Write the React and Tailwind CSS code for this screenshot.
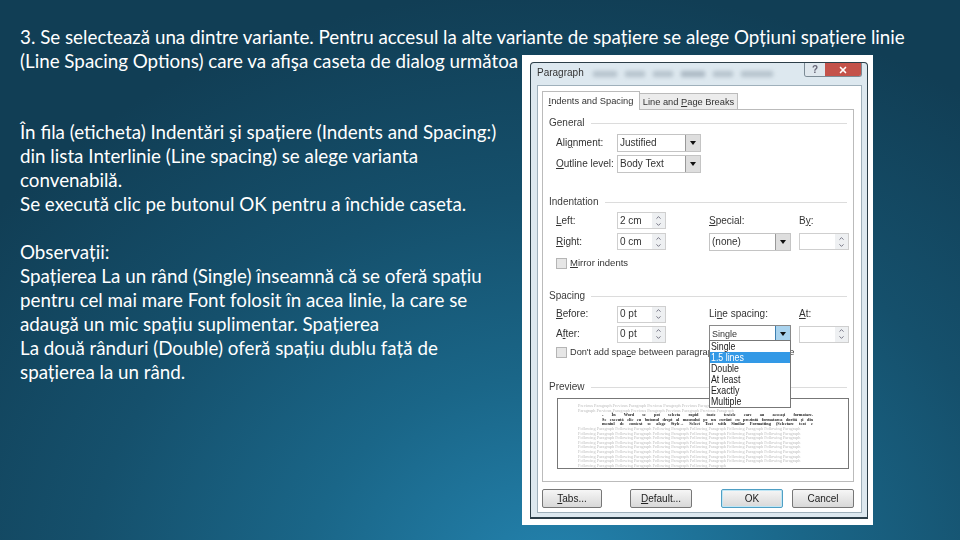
import { ChevronDown, ChevronUp, X } from 'lucide-react'

const textFont = "font-['Lato','Open_Sans',sans-serif]"
const dialogFont = "font-['Liberation_Sans','Arial',sans-serif]"

const introLines = [
  '3. Se selectează una dintre variante. Pentru accesul la alte variante de spațiere se alege Opțiuni spațiere linie',
  '(Line Spacing Options) care va afişa caseta de dialog următoa',
]

const bodyLines = [
  'În fila (eticheta) Indentări şi spațiere (Indents and Spacing:)',
  'din lista Interlinie (Line spacing) se alege varianta',
  'convenabilă.',
  'Se execută clic pe butonul OK pentru a închide caseta.',
]

const noteLines = [
  'Observații:',
  'Spațierea La un rând (Single) înseamnă că se oferă spațiu',
  'pentru cel mai mare Font folosit în acea linie, la care se',
  'adaugă un mic spațiu suplimentar. Spațierea',
  'La două rânduri (Double) oferă spațiu dublu față de',
  'spațierea la un rând.',
]

const dropdownItems = ['Single', '1.5 lines', 'Double', 'At least', 'Exactly', 'Multiple']

const followingLine =
  'Following Paragraph Following Paragraph Following Paragraph Following Paragraph Following Paragraph Following Paragraph'

function Lines({ items }) {
  return (
    <div>
      {items.map((line) => (
        <p key={line} className="h-6 whitespace-nowrap">
          {line}
        </p>
      ))}
    </div>
  )
}

function SectionTitle({ children }) {
  return (
    <div className="flex h-4 items-center gap-1.5 pr-[6px]">
      <span className="text-[#3c3c3c]">{children}</span>
      <span className="h-px flex-1 bg-[#dcdcdc]" />
    </div>
  )
}

function Combo({ value, active, className, valueClass = '' }) {
  return (
    <div className={`flex items-center border bg-white pl-[2px] ${active ? 'border-[#8a8a8a]' : 'border-[#c4c4c4]'} ${className}`}>
      <span className={`flex-1 whitespace-nowrap text-[#333] ${valueClass}`}>{value}</span>
      <span
        className={`flex h-full w-[15px] items-center justify-center border-l ${
          active ? 'border-[#3d7fb0] bg-[#a9d3ee]' : 'border-[#999] bg-[#dedede]'
        }`}
      >
        <span className="h-0 w-0 border-x-[3px] border-t-[4px] border-x-transparent border-t-[#111]" />
      </span>
    </div>
  )
}

function Spinner({ value, className }) {
  return (
    <div className={`flex items-center border border-[#cfcfcf] bg-white pl-[2px] ${className}`}>
      <span className="flex-1 whitespace-nowrap text-[#333]">{value}</span>
      <span className="flex h-full w-[13px] flex-col items-center justify-center bg-[#eef0f2] text-[#667]">
        <ChevronUp size={7} strokeWidth={3} />
        <ChevronDown size={7} strokeWidth={3} />
      </span>
    </div>
  )
}

function Checkbox({ label, className }) {
  return (
    <div className={`flex h-4 items-center gap-[3px] whitespace-nowrap pl-[14px] text-[#333] ${className}`}>
      <span className="h-[11px] w-[11px] border border-[#b5b5b5] bg-[#e6e6e6]" />
      <span>{label}</span>
    </div>
  )
}

function ControlRow({ label, control, special, extra, className = 'h-[21px]' }) {
  return (
    <div className={`flex items-center pl-[14px] text-[#333] ${className}`}>
      <span className="w-[61px] shrink-0 whitespace-nowrap">{label}</span>
      <div className="w-[92px] shrink-0">{control}</div>
      <div className="w-[90px] shrink-0">{special}</div>
      <div>{extra}</div>
    </div>
  )
}

function DialogButton({ children, primary }) {
  return (
    <button
      className={`block h-[19px] w-[62px] rounded-[2px] border bg-gradient-to-b from-[#f6f6f6] to-[#d8d8d8] text-[10px] text-[#222] ${
        primary ? 'border-[#4f9fc4] shadow-[inset_0_0_0_1px_#bfe6f5]' : 'border-[#777]'
      }`}
    >
      {children}
    </button>
  )
}

function ParagraphDialog() {
  return (
    <div className={`absolute left-[522px] top-[55px] h-[470px] w-[351px] bg-white pb-[6px] pl-[8px] pr-[5px] pt-[7px] text-[10px] leading-[14px] blur-[0.35px] ${dialogFont}`}>
      <div className="flex h-[457px] flex-col rounded-t-[4px] border border-b-2 border-[#2c3e48] bg-[#dde8ef] pl-[6px] pr-[5px]">
        <div className="relative flex h-[22px] items-center overflow-hidden">
          <div className="flex items-center gap-2 pl-14 opacity-60 blur-[2px]">
            <span className="h-[6px] w-6 bg-[#9aa8b4]" />
            <span className="h-[6px] w-5 bg-[#9aa8b4]" />
            <span className="h-[6px] w-5 bg-[#9aa8b4]" />
            <span className="h-[6px] w-6 bg-[#8796a4]" />
            <span className="h-[6px] w-5 bg-[#9aa8b4]" />
            <span className="h-[6px] w-8 bg-[#9aa8b4]" />
          </div>
          <span className="absolute left-0 top-[3px] text-[10px] text-[#333]">Paragraph</span>
          <div className="absolute right-0 top-0 flex h-[14px] overflow-hidden rounded-b-[3px] border border-t-0 border-[#7b8a94]">
            <span className="flex w-[20px] items-center justify-center bg-[#dfe7ed] text-[10px] font-bold text-[#667]">?</span>
            <span className="flex w-[36px] items-center justify-center bg-[#c4524a] text-white">
              <X size={10} strokeWidth={4} />
            </span>
          </div>
        </div>

        <div className="h-[428px] border border-[#9fb0bb] bg-white pl-[4px] pr-[7px] pt-[5px]">
          <div className="flex h-[18px] items-end whitespace-nowrap text-[9.3px]">
            <div className="relative z-10 flex h-[19px] w-[98px] translate-y-px items-center justify-center border border-b-0 border-[#bbb] bg-white text-[#333]">
              <span><u>I</u>ndents and Spacing</span>
            </div>
            <div className="flex h-[16px] w-[98px] items-center justify-center border border-b-0 border-l-0 border-[#bbb] bg-[#ececec] text-[#333]">
              <span>Line and <u>P</u>age Breaks</span>
            </div>
          </div>

          <div className="h-[373px] border border-[#bbb] bg-white pl-[6px] pt-[5px]">
            <SectionTitle>General</SectionTitle>
            <div className="mt-[2px] flex h-[20px] items-center pl-[7px] text-[#333]">
              <span className="w-[61px]">Ali<u>g</u>nment:</span>
              <Combo value="Justified" className="h-[18px] w-[84px]" />
            </div>
            <div className="mt-px flex h-[20px] items-center pl-[7px] text-[#333]">
              <span className="w-[61px] whitespace-nowrap"><u>O</u>utline level:</span>
              <Combo value="Body Text" className="h-[18px] w-[84px]" />
            </div>

            <div className="mt-[20px]">
              <SectionTitle>Indentation</SectionTitle>
            </div>
            <div className="-ml-[7px]">
              <ControlRow
                label={<><u>L</u>eft:</>}
                control={<Spinner value="2 cm" className="h-[17px] w-[49px]" />}
                special={<><u>S</u>pecial:</>}
                extra={<>B<u>y</u>:</>}
              />
              <ControlRow
                label={<><u>R</u>ight:</>}
                control={<Spinner value="0 cm" className="h-[17px] w-[49px]" />}
                special={<Combo value="(none)" active={false} className="h-[18px] w-[82px] border-[#8a8a8a]" />}
                extra={<Spinner value="" className="h-[17px] w-[50px]" />}
              />
              <Checkbox label={<><u>M</u>irror indents</>} className="mt-[3px] text-[9.5px]" />
            </div>

            <div className="mt-[17px]">
              <SectionTitle>Spacing</SectionTitle>
            </div>
            <div className="relative -ml-[7px]">
              <ControlRow
                className="h-[20px]"
                label={<><u>B</u>efore:</>}
                control={<Spinner value="0 pt" className="h-[17px] w-[49px]" />}
                special={<>Li<u>n</u>e spacing:</>}
                extra={<><u>A</u>t:</>}
              />
              <ControlRow
                className="h-[20px]"
                label={<>A<u>f</u>ter:</>}
                control={<Spinner value="0 pt" className="h-[17px] w-[49px]" />}
                special={<Combo value="Single" active valueClass="text-[9px]" className="h-[18px] w-[82px]" />}
                extra={<Spinner value="" className="h-[17px] w-[50px]" />}
              />
              <Checkbox label={<>Don't add spa<u>c</u>e between paragraphs of the same style</>} className="text-[9.2px]" />
              <div className="absolute left-[167px] top-[36px] z-20 w-[82px] border border-[#777] bg-white text-[11px] leading-[11px] text-[#222]">
                {dropdownItems.map((item) => (
                  <div key={item} className={item === '1.5 lines' ? 'bg-[#3399e6] pl-[1px] text-white' : 'pl-[1px]'}>
                    <span className="block origin-left scale-x-[0.8]">{item}</span>
                  </div>
                ))}
              </div>
            </div>

            <div className="mt-[19px]">
              <SectionTitle>Preview</SectionTitle>
            </div>
            <div className="ml-[8px] mt-[3px] h-[71px] w-[292px] overflow-hidden border border-[#777] bg-white px-[20px] pt-[5px] font-['Liberation_Serif',serif] text-[4.3px] leading-[4.6px] text-[#bdbdbd]">
              <p className="whitespace-nowrap">Previous Paragraph Previous Paragraph Previous Paragraph Previous Paragraph Previous Paragraph Previous Paragraph</p>
              <p className="whitespace-nowrap">Paragraph Previous Paragraph Previous Paragraph Previous Paragraph Previous Paragraph</p>
              <div className="ml-[24px] w-[211px] font-bold text-[#222] [text-align-last:justify]">
                <p>- În Word se pot selecta rapid toate textele care au aceeași formatare.</p>
                <p>Se execută clic cu butonul drept al mausului pe un cuvânt cu prezintă formatarea dorită și din</p>
                <p>meniul de context se alege Style→ Select Text with Similar Formatting (Selectare text c</p>
              </div>
              {[0, 1, 2, 3, 4, 5, 6, 7].map((row) => (
                <p key={row} className="whitespace-nowrap">{followingLine}</p>
              ))}
              <p className="whitespace-nowrap">Following Paragraph Following Paragraph Following Paragraph Following Paragraph</p>
            </div>
          </div>

          <div className="flex h-[26px] items-end">
            <DialogButton><u>T</u>abs...</DialogButton>
            <div className="ml-[28px]">
              <DialogButton><u>D</u>efault...</DialogButton>
            </div>
            <div className="ml-[29px]">
              <DialogButton primary>OK</DialogButton>
            </div>
            <div className="ml-[9px]">
              <DialogButton>Cancel</DialogButton>
            </div>
          </div>
        </div>
      </div>
    </div>
  )
}

export default function App() {
  return (
    <div className={`relative h-[540px] w-[960px] overflow-hidden bg-[radial-gradient(ellipse_75%_110%_at_58%_108%,#2484b0_0%,#1a6688_35%,#15506c_65%,#113e55_100%)] text-[18.8px] leading-6 text-white ${textFont}`}>
      <div className="pl-5 pt-[25px]">
        <Lines items={introLines} />
        <div className="mt-[47px]">
          <Lines items={bodyLines} />
        </div>
        <div className="mt-6">
          <Lines items={noteLines} />
        </div>
      </div>
      <ParagraphDialog />
    </div>
  )
}
